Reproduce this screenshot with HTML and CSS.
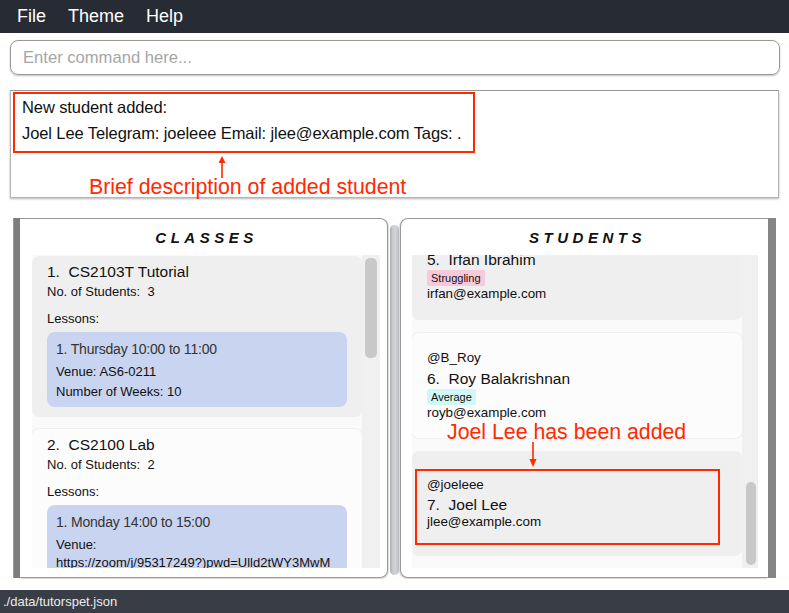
FILE: index.html
```html
<!DOCTYPE html>
<html>
<head>
<meta charset="utf-8">
<link rel="stylesheet" href="styles.css">
</head>
<body>
<div class="app">
  <div class="menubar"><span>File</span><span>Theme</span><span>Help</span></div>
  <div class="command"><span class="placeholder">Enter command here...</span></div>
  <div class="result">
    <div class="result-text">
      <div>New student added:</div>
      <div>Joel Lee Telegram: joeleee Email: jlee@example.com Tags: .</div>
    </div>
    <div class="ann-box result-ann"></div>
    <svg class="arrow result-arrow" width="10" height="22" viewBox="0 0 10 22"><line x1="5" y1="6" x2="5" y2="22" stroke="#ff2a00" stroke-width="1.6"/><polygon points="5,0 1.5,7 8.5,7" fill="#ff2a00"/></svg>
    <div class="ann-text result-note">Brief description of added student</div>
  </div>
  <div class="panels">
    <div class="stripe"></div>
    <div class="panel panel-left">
      <div class="panel-title">CLASSES</div>
      <div class="list">
        <div class="viewport">
          <div class="items">
            <div class="card card-grey class-card">
              <div class="name">1.&nbsp; CS2103T Tutorial</div>
              <div class="small students">No. of Students:&nbsp; 3</div>
              <div class="small lessons">Lessons:</div>
              <div class="lesson">
                <div class="lesson-head">1. Thursday 10:00 to 11:00</div>
                <div class="small venue">Venue: AS6-0211</div>
                <div class="small weeks">Number of Weeks: 10</div>
              </div>
            </div>
            <div class="card card-white class-card">
              <div class="name">2.&nbsp; CS2100 Lab</div>
              <div class="small students">No. of Students:&nbsp; 2</div>
              <div class="small lessons">Lessons:</div>
              <div class="lesson">
                <div class="lesson-head">1. Monday 14:00 to 15:00</div>
                <div class="small venue">Venue:</div>
                <div class="small weeks url">https://zoom/j/95317249?)pwd=Ulld2tWY3MwM</div>
              </div>
            </div>
          </div>
        </div>
        <div class="track"><div class="thumb thumb-left"></div></div>
      </div>
    </div>
    <div class="divider"><div class="divider-bar"></div></div>
    <div class="panel panel-right">
      <div class="panel-title">STUDENTS</div>
      <div class="list list-right">
        <div class="viewport">
          <div class="items items-students">
            <div class="card card-grey student student-top">
              <div class="name">5.&nbsp; Irfan Ibrahim</div>
              <div class="tagrow"><span class="tag tag-pink">Struggling</span></div>
              <div class="small">irfan@example.com</div>
            </div>
            <div class="card card-white student">
              <div class="small">@B_Roy</div>
              <div class="name">6.&nbsp; Roy Balakrishnan</div>
              <div class="tagrow"><span class="tag tag-cyan">Average</span></div>
              <div class="small">royb@example.com</div>
            </div>
            <div class="card card-grey student student-new">
              <div class="small">@joeleee</div>
              <div class="name">7.&nbsp; Joel Lee</div>
              <div class="small">jlee@example.com</div>
              <div class="ann-box new-ann"></div>
            </div>
          </div>
        </div>
        <div class="track track-right"><div class="thumb thumb-right"></div></div>
      </div>
      <div class="ann-text added-note">Joel Lee has been added</div>
      <svg class="arrow added-arrow" width="10" height="25" viewBox="0 0 10 25"><line x1="5" y1="0" x2="5" y2="18" stroke="#ff2a00" stroke-width="1.6"/><polygon points="5,25 1.5,17 8.5,17" fill="#ff2a00"/></svg>
    </div>
    <div class="stripe stripe-right"></div>
  </div>
  <div class="footer">./data/tutorspet.json</div>
</div>
</body>
</html>
```

FILE: styles.css
```css
html, body {
  margin: 0;
  padding: 0;
}
body {
  width: 789px;
  height: 613px;
  overflow: hidden;
  background: #ffffff;
  font-family: "Liberation Sans", Arial, sans-serif;
  color: #111;
}
.app {
  display: flex;
  flex-direction: column;
  height: 613px;
}
.menubar {
  height: 33px;
  background: #272c34;
  color: #ffffff;
  display: flex;
  align-items: center;
  gap: 22px;
  padding-left: 17px;
  font-size: 18px;
}
.command {
  margin: 7px 9px 0 10px;
  height: 33px;
  border: 1px solid #999;
  border-radius: 8px;
  box-shadow: 0 1px 2px rgba(0,0,0,0.25);
  display: flex;
  align-items: center;
  padding-left: 12px;
  font-size: 16.6px;
}
.placeholder {
  color: #a6a6a6;
}
.result {
  position: relative;
  margin: 15px 10px 0 10px;
  height: 106px;
  border: 1px solid #b4b4b4;
  border-top-color: #999;
  box-shadow: 0 1px 2px rgba(0,0,0,0.3);
}
.result-text {
  padding: 3px 0 0 11px;
  font-size: 16.5px;
  line-height: 26px;
  color: #111;
  letter-spacing: -0.1px;
}
.ann-box {
  position: absolute;
  border: 2px solid #ff2a00;
  box-sizing: border-box;
}
.result-ann {
  left: 2px;
  top: 1px;
  width: 462px;
  height: 61px;
}
.arrow {
  position: absolute;
}
.result-arrow {
  left: 206px;
  top: 65px;
}
.ann-text {
  position: absolute;
  color: #ff2a00;
  font-size: 21.3px;
  line-height: 24px;
  white-space: nowrap;
}
.result-note {
  left: 78px;
  top: 84px;
}
.panels {
  margin-top: 20px;
  height: 360px;
  display: flex;
  padding-left: 13px;
}
.stripe {
  width: 7px;
  background: #7d7d7d;
  border-left: 1px solid #9a9a9a;
  box-sizing: border-box;
}
.stripe-right {
  width: 8px;
  background: #858585;
  border-left: none;
}
.panel {
  position: relative;
  width: 368px;
  box-sizing: border-box;
  border: 1px solid #999;
  background: #ffffff;
  display: flex;
  flex-direction: column;
}
.panel-left {
  border-left: none;
  border-radius: 0 8px 8px 0;
  box-shadow: 1px 1px 1px rgba(0,0,0,0.15);
}
.panel-right {
  border-right: none;
  border-radius: 8px 0 0 8px;
  box-shadow: -1px 1px 1px rgba(0,0,0,0.15);
}
.panel-title {
  height: 36px;
  display: flex;
  align-items: center;
  justify-content: center;
  padding-top: 1px;
  padding-left: 6px;
  box-sizing: border-box;
  font-size: 15px;
  font-weight: bold;
  font-style: italic;
  letter-spacing: 4.5px;
  color: #111;
}
.list {
  height: 313px;
  display: flex;
  margin-left: 12px;
}
.list-right {
  margin-left: 11px;
}
.viewport {
  width: 330px;
  overflow: hidden;
  background: #fafafa;
}
.items {
  padding-top: 1px;
  display: flex;
  flex-direction: column;
  gap: 12px;
}
.items-students {
  margin-top: -40px;
  padding-top: 0;
  gap: 13px;
}
.track {
  width: 18px;
  background: #f0f0f0;
  padding: 3px 3px 0 3px;
  box-sizing: border-box;
}
.track-right {
  width: 16px;
  padding: 0 2px 0 4px;
  display: flex;
  flex-direction: column;
  justify-content: flex-end;
}
.thumb {
  background: #c8c8c8;
  border-radius: 5px;
}
.thumb-left {
  height: 100px;
}
.thumb-right {
  height: 83px;
  margin-bottom: 3px;
}
.card {
  position: relative;
  border-radius: 7px;
  box-sizing: border-box;
}
.card-grey {
  background: #efefef;
}
.card-white {
  background: #fcfcfc;
  box-shadow: 0 0 0 1px #f0f0f0;
}
.class-card {
  padding: 7px 15px 10px 15px;
}
.name {
  font-size: 15.5px;
  line-height: 18px;
  color: #111;
}
.small {
  font-size: 13px;
  line-height: 16px;
  color: #111;
}
.student .small {
  font-size: 13.4px;
}
.students {
  margin-top: 3px;
}
.lessons {
  margin-top: 11px;
}
.lesson {
  margin-top: 5px;
  background: #c9d4f1;
  border-radius: 8px;
  padding: 9px 9px 7px 9px;
  overflow: hidden;
}
.lesson-head {
  font-size: 14px;
  line-height: 16px;
  color: #333;
  letter-spacing: -0.2px;
}
.venue {
  margin-top: 7px;
}
.weeks {
  margin-top: 4px;
}
.url {
  margin-top: 2px;
  white-space: nowrap;
}
.student {
  height: 105px;
  padding: 0 15px;
  display: flex;
  flex-direction: column;
  justify-content: center;
}
.student .name {
  line-height: 19px;
  margin-top: 3px;
}
.student-top {
  justify-content: flex-end;
  padding-bottom: 18px;
}
.student-top .name {
  margin-top: 0;
}
.tagrow {
  display: flex;
  margin-top: 1px;
}
.tag {
  font-size: 11px;
  line-height: 16px;
  padding: 0 4px;
  border-radius: 2px;
  color: #111;
}
.tag-pink {
  background: #f8c9d9;
}
.tag-cyan {
  background: #d1f8f8;
}
.student-new .name {
  margin-top: 2px;
}
.new-ann {
  left: 3px;
  top: 18px;
  width: 305px;
  height: 76px;
}
.added-note {
  left: 46px;
  top: 201px;
}
.added-arrow {
  left: 127px;
  top: 223px;
}
.divider {
  width: 12px;
  display: flex;
}
.divider-bar {
  flex: 1;
  margin: 7px 1px 3px 2px;
  border-radius: 5px;
  background: linear-gradient(to right, #a9abaf, #c9cbcf 30%, #d2d4d8 60%, #b9bbbf);
}
.footer {
  margin-top: 12px;
  height: 23px;
  background: #393e46;
  color: #ececec;
  font-size: 13px;
  line-height: 23px;
  padding-left: 3px;
}
```
